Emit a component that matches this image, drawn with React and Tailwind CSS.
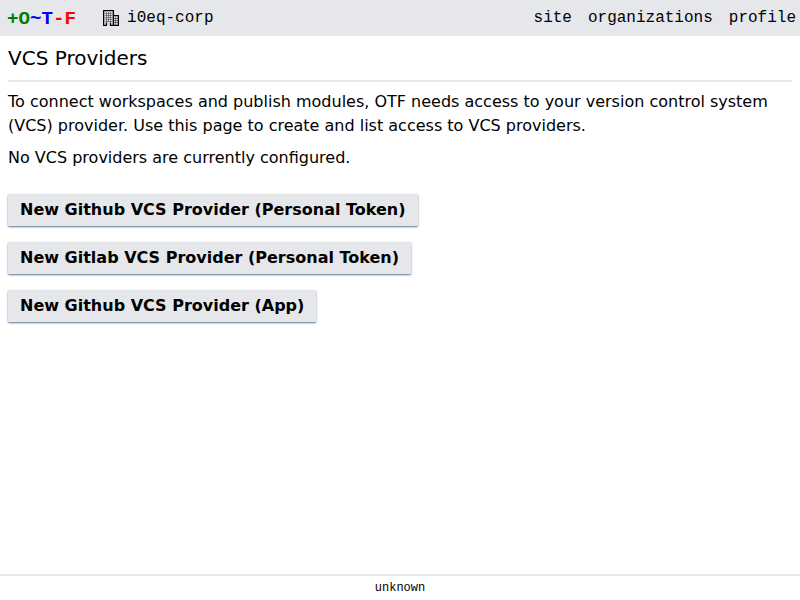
const providers = [
  'New Github VCS Provider (Personal Token)',
  'New Gitlab VCS Provider (Personal Token)',
  'New Github VCS Provider (App)',
];

function BuildingIcon() {
  return (
    <svg className="h-4 w-4" viewBox="0 0 16 16" fill="none" stroke="currentColor">
      <path strokeWidth="1.3" d="M.65 15.350V.65h9.700v14.700M10.350 5.650h5v9.700" />
      <path strokeWidth=".4" d="M3.500 2v10M5.500 2v10M7.500 2v10M2 3.500h7.500M2 5.500h7.500M2 7.500h7.500M2 9.500h7.500M2 11.500h7.500" />
      <path strokeWidth=".45" d="M12.500 7v8M11 8.500h4M11 10.500h4M11 12.500h4" />
      <path strokeWidth="1.300" d="M3.500 12.500v3M7.500 12.500v3M0 15.350h4M7 15.350h9" />
    </svg>
  );
}

export default function App() {
  return (
    <div className="flex h-screen flex-col bg-white font-['DejaVu_Sans',sans-serif] text-base text-black">
      <header className="flex h-9 shrink-0 items-center bg-gray-200 pr-1 pl-[7px] font-['Liberation_Mono',monospace]">
        <a className="mr-[27px] pt-0.5 text-[19.2px] font-bold">
          <span className="text-[#008000]">+O</span>
          <span className="text-[#0000ff]">~T</span>
          <span className="text-[#ff0000]">-F</span>
        </a>
        <div className="flex items-center gap-2">
          <BuildingIcon />
          <span className="-mt-px">i0eq-corp</span>
        </div>
        <nav className="-mt-px ml-auto flex gap-4">
          <a>site</a>
          <a>organizations</a>
          <a>profile</a>
        </nav>
      </header>
      <main className="flex flex-1 flex-col gap-2 px-2 pt-2">
        <h1 className="text-xl">VCS Providers</h1>
        <hr className="border-t-2 border-gray-200" />
        <p>
          To connect workspaces and publish modules, OTF needs access to your version control system (VCS) provider.
          Use this page to create and list access to VCS providers.
        </p>
        <p>No VCS providers are currently configured.</p>
        <div className="mt-4 flex flex-col items-start gap-4">
          {providers.map((label) => (
            <button
              key={label}
              className="h-8 rounded-[1px] bg-gray-200 px-3 font-bold shadow-[0_1px_2px_0_rgb(30_58_100/0.7)]"
            >
              {label}
            </button>
          ))}
        </div>
      </main>
      <footer className="border-t-2 border-gray-200 py-1 text-center font-['Liberation_Mono',monospace] text-xs">
        unknown
      </footer>
    </div>
  );
}
